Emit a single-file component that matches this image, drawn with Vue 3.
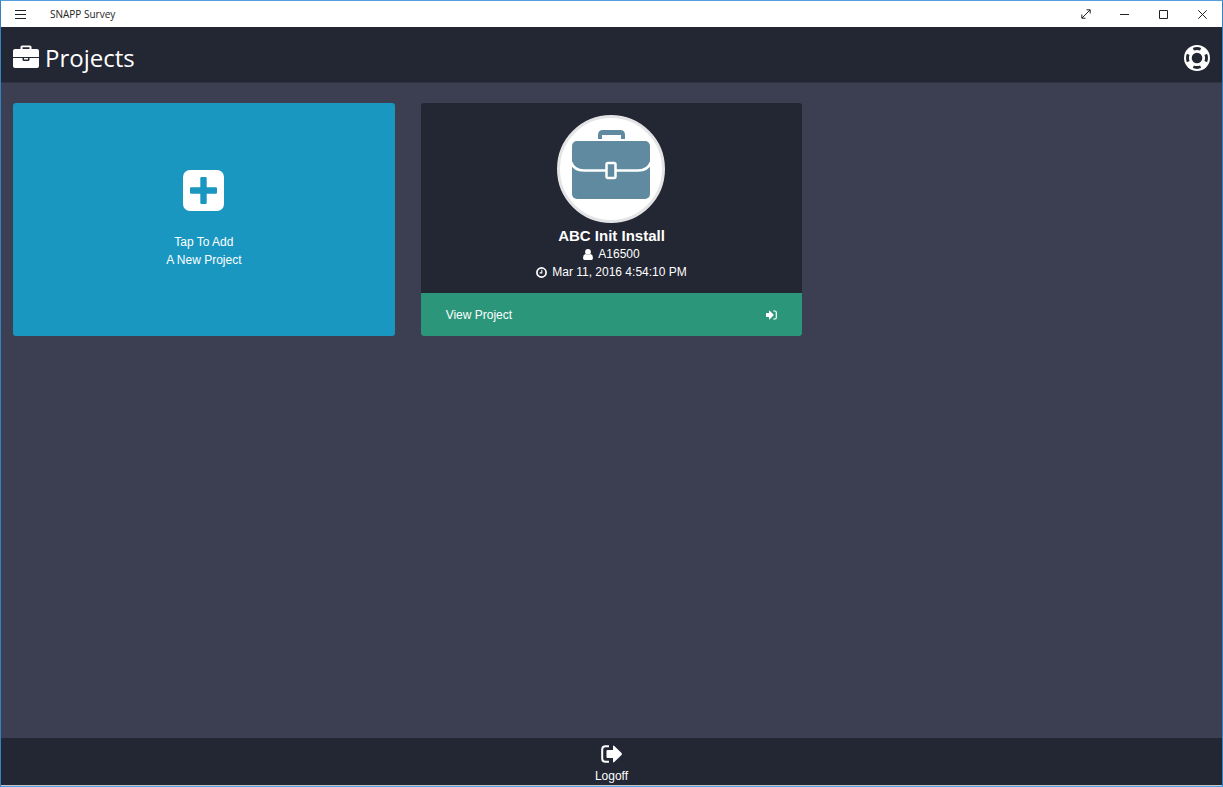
<script setup>
import { ref } from "vue";

const projects = ref([
    {
        id: 1,
        name: "ABC Init Install",
        code: "A16500",
        updated: "Mar 11, 2016 4:54:10 PM"
    }
]);
</script>

<template>
    <div class="window">
        <div class="title-bar">
            <button class="title-btn" aria-label="Menu">
                <svg width="11" height="9" viewBox="0 0 11 9">
                    <path d="M0 .5h11M0 4.5h11M0 8.5h11" />
                </svg>
            </button>
            <span class="app-name">SNAPP Survey</span>
            <div class="window-controls">
                <button class="title-btn" aria-label="Full screen">
                    <svg width="10" height="10" viewBox="0 0 10 10">
                        <path d="M1 9 9 1M5.5.8h3.7v3.7M.8 5.5v3.7h3.7" />
                    </svg>
                </button>
                <button class="title-btn" aria-label="Minimize">
                    <svg width="9" height="9" viewBox="0 0 9 9"><path d="M0 4.5h9" /></svg>
                </button>
                <button class="title-btn" aria-label="Maximize">
                    <svg width="9" height="9" viewBox="0 0 9 9"><path d="M.5.5h8v8h-8z" /></svg>
                </button>
                <button class="title-btn" aria-label="Close">
                    <svg width="9" height="9" viewBox="0 0 9 9"><path d="m.3.3 8.4 8.4M8.7.3.3 8.7" /></svg>
                </button>
            </div>
        </div>

        <header class="header">
            <svg class="header-icon" width="26" height="23" viewBox="0 0 26 23">
                <path
                    fill="#fff"
                    d="M7.500 4V2Q7.500.4 9.100.4h7.800q1.600 0 1.600 1.600v2H24q2 0 2 2v6H0V6q0-2 2-2zm2 0h7V2.300h-7zM0 13h9.500v1.500q0 1.500 1.500 1.500h4q1.500 0 1.500-1.500V13H26v8q0 2-2 2H2q-2 0-2-2zM11 13h4v1.500h-4z"
                    fill-rule="evenodd"
                />
            </svg>
            <h1>Projects</h1>
            <button class="help-btn" aria-label="Help">
                <svg width="26" height="26" viewBox="0 0 26 26">
                    <circle cx="13" cy="13" r="13" fill="#fff" />
                    <circle
                        cx="13" cy="13" r="9.5" fill="none" stroke="#232633" stroke-width="2.9"
                        pathLength="80" stroke-dasharray="10 10" stroke-dashoffset="5"
                    />
                    <circle cx="13" cy="13" r="5.3" fill="#232633" />
                </svg>
            </button>
        </header>

        <main class="projects">
            <button class="card add-card">
                <svg width="41" height="41" viewBox="0 0 41 41">
                    <rect width="41" height="41" rx="7" fill="#fff" />
                    <path
                        fill="#1997c0"
                        d="M18.500 7h4q1.200 0 1.200 1.200v9.100h9.100q1.200 0 1.200 1.200v4q0 1.200-1.200 1.200h-9.100v9.100q0 1.200-1.200 1.200h-4q-1.200 0-1.200-1.200v-9.100H8.200Q7 23.700 7 22.500v-4q0-1.200 1.200-1.200h9.100V8.200q0-1.200 1.200-1.200z"
                    />
                </svg>
                <span>Tap To Add<br />A New Project</span>
            </button>

            <article v-for="project in projects" :key="project.id" class="card project-card">
                <div class="project-info">
                    <svg width="108" height="108" viewBox="0 0 108 108">
                        <circle cx="54" cy="54" r="52.5" fill="#fff" stroke="#e4e4e6" stroke-width="3" />
                        <path fill="#5f8a9f" d="M41 24v-4q0-5 5-5h17q5 0 5 5v4h-4v-4H45v4z" />
                        <rect x="15" y="26" width="78" height="58" rx="5" fill="#5f8a9f" />
                        <path d="M14 47q3 8.500 13 8.500h54q10 0 13-8.500" fill="none" stroke="#fff" stroke-width="2.5" />
                        <rect x="49.5" y="48" width="9" height="15" rx="1.5" fill="#5f8a9f" stroke="#fff" stroke-width="2.5" />
                    </svg>
                    <h2>{{ project.name }}</h2>
                    <p>
                        <svg width="10" height="11" viewBox="0 0 10 11" fill="#fff">
                            <path d="M2.500 4.900Q.2 5.300 0 9q0 2 1.700 2h6.600Q10 11 10 9q-.2-3.700-2.500-4.100Q5 7.200 2.500 4.900z" />
                            <circle cx="5" cy="2.9" r="2.9" />
                        </svg>
                        {{ project.code }}
                    </p>
                    <p>
                        <svg width="11" height="11" viewBox="0 0 11 11" fill="none" stroke="#fff">
                            <circle cx="5.5" cy="5.5" r="4.6" stroke-width="1.7" />
                            <path d="M5.800 2.800v3.100H3.600" stroke-width="1.1" />
                        </svg>
                        {{ project.updated }}
                    </p>
                </div>
                <button class="view-btn">
                    <span>View Project</span>
                    <svg width="11" height="10" viewBox="0 0 11 10">
                        <path fill="#fff" d="M0 3.500q0-.5.500-.5H3V1q0-.9.700-.3l3.800 3.800q.4.500 0 1L3.700 9.300Q3 9.900 3 9V7H.5Q0 7 0 6.500z" />
                        <path d="M7.200 1h1.500q1.600 0 1.600 1.600v4.800Q10.300 9 8.700 9H7.200" fill="none" stroke="#fff" stroke-width="1.2" />
                    </svg>
                </button>
            </article>
        </main>

        <footer class="footer">
            <button class="logoff-btn">
                <svg width="22" height="18" viewBox="0 0 22 18">
                    <path d="M8 1.200H4.500q-3.300 0-3.300 3.300v9q0 3.300 3.300 3.300H8" fill="none" stroke="#fff" stroke-width="2" />
                    <path fill="#fff" d="M5.500 6q0-.9.9-.9H12V1.500q0-1.600 1.300-.6l7.200 7.200q.9.9 0 1.800l-7.200 7.200q-1.300 1-1.300-.6v-3.600H6.400q-.9 0-.9-.9z" />
                </svg>
                <span>Logoff</span>
            </button>
        </footer>
    </div>
</template>

<style>
body {
    margin: 0;
}
</style>

<style scoped>
.window {
    display: flex;
    flex-direction: column;
    box-sizing: border-box;
    min-height: 100vh;
    border: 1px solid #3482c4;
    border-top-color: #559fdc;
    border-bottom-color: #559fdc;
    background: #3c3f51;
    color: #fff;
    font-family: "Liberation Sans", Arial, sans-serif;
    font-size: 12px;
    line-height: 18px;
}

button {
    padding: 0;
    border: none;
    background: none;
    color: inherit;
    font: inherit;
    cursor: pointer;
}

svg {
    display: block;
    flex-shrink: 0;
}

.title-bar {
    display: flex;
    align-items: center;
    height: 26px;
    background: #fff;
    color: #222;
    font-family: "Segoe UI", "Open Sans", sans-serif;
    font-size: 10px;
}

.title-btn {
    display: flex;
    align-items: center;
    justify-content: center;
    width: 39px;
    height: 25px;
}

.title-btn svg {
    fill: none;
    stroke: #222;
}

.app-name {
    margin-left: 10px;
    line-height: 16px;
}

.window-controls {
    display: flex;
    margin-left: auto;
}

.header {
    display: flex;
    align-items: center;
    gap: 6px;
    height: 55px;
    padding: 0 12px;
    border-bottom: 1px solid #30333f;
    background: #232633;
}

.header h1 {
    margin: 0;
    padding-top: 6px;
    font-family: "Segoe UI", "Open Sans", sans-serif;
    font-size: 24px;
    font-weight: 400;
    line-height: 32px;
}

.help-btn {
    margin-left: auto;
    padding-top: 6px;
}

.header-icon {
    padding-top: 4px;
}

.projects {
    display: grid;
    grid-template-columns: repeat(3, 1fr);
    align-content: start;
    gap: 26px;
    flex: 1;
    padding: 20px 12px;
}

.card {
    overflow: hidden;
    border-radius: 3px;
}

.add-card {
    display: flex;
    flex-direction: column;
    align-items: center;
    justify-content: center;
    gap: 22px;
    background: #1997c0;
}

.project-card {
    background: #232633;
}

.project-info {
    display: flex;
    flex-direction: column;
    align-items: center;
    padding: 12px;
}

.project-info h2 {
    margin: 4px 0 0;
    font-size: 15px;
    line-height: 18px;
}

.project-info p {
    display: flex;
    align-items: center;
    gap: 5px;
    margin: 0;
}

.view-btn {
    display: flex;
    align-items: center;
    justify-content: space-between;
    width: 100%;
    height: 43px;
    padding: 0 25px;
    background: #2c967a;
}

.footer {
    display: flex;
    justify-content: center;
    height: 47px;
    border-bottom: 1px solid #c4c6ca;
    background: #232633;
}

.logoff-btn {
    display: flex;
    flex-direction: column;
    align-items: center;
    gap: 4px;
    padding-top: 7px;
}
</style>
